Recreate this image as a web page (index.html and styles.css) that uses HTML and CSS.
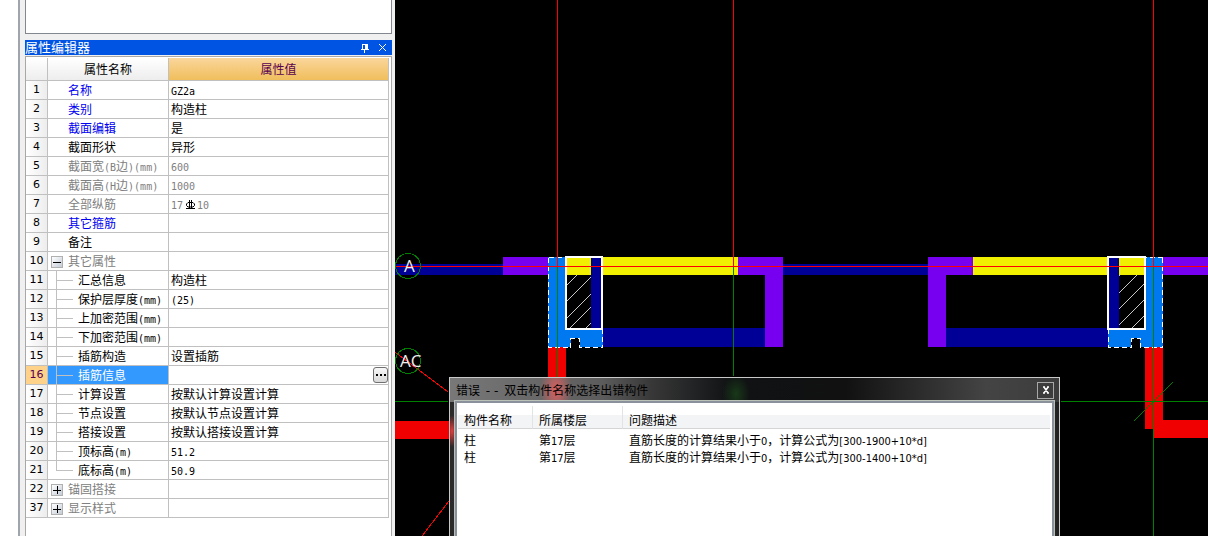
FILE: index.html
```
<!DOCTYPE html>
<html lang="zh-CN">
<head>
<meta charset="utf-8">
<title>属性编辑器</title>
<link rel="stylesheet" href="styles.css">
</head>
<body>
<main class="app">
  <aside class="sidebar">
    <div class="list-box"></div>
    <section class="editor">
      <header class="editor-title">
        <h1>属性编辑器</h1>
        <button class="title-btn" type="button" aria-label="固定"><svg width="9" height="10" viewBox="0 0 9 10" shape-rendering="crispEdges"><path d="M2 1h6v1H2zM2 1h1v5H2zM5 1h3v5H5zM1 6h8v1H1zM4 7h1v3H4z" fill="#fff"/></svg></button>
        <button class="title-btn" type="button" aria-label="关闭"><svg width="9" height="9" viewBox="0 0 9 9"><path d="M1 1l7 7M8 1l-7 7" stroke="#fff"/></svg></button>
      </header>
      <div class="grid-box">
        <table class="props">
          <colgroup><col class="c-num"><col class="c-name"><col></colgroup>
          <thead><tr><th></th><th>属性名称</th><th class="active">属性值</th></tr></thead>
          <tbody>
            <tr><th>1</th><td class="name blue-text">名称</td><td><span class="mono">GZ2a</span></td></tr>
            <tr><th>2</th><td class="name blue-text">类别</td><td>构造柱</td></tr>
            <tr><th>3</th><td class="name blue-text">截面编辑</td><td>是</td></tr>
            <tr><th>4</th><td class="name">截面形状</td><td>异形</td></tr>
            <tr class="muted"><th>5</th><td class="name">截面宽<span class="mono">(B</span>边<span class="mono">)(mm)</span></td><td><span class="mono">600</span></td></tr>
            <tr class="muted"><th>6</th><td class="name">截面高<span class="mono">(H</span>边<span class="mono">)(mm)</span></td><td><span class="mono">1000</span></td></tr>
            <tr class="muted"><th>7</th><td class="name">全部纵筋</td><td><span class="mono">17</span><svg class="rebar" width="14" height="10" viewBox="0 0 14 10" role="img" aria-label="三级钢"><path d="M5 2.500h5l1.500 1.500v1.500L10 7H5L3.500 5.500V4zM6.500 0v9M8.500 0v9M3 8.500h9" fill="none" stroke="#000"/></svg><span class="mono">10</span></td></tr>
            <tr><th>8</th><td class="name blue-text">其它箍筋</td><td></td></tr>
            <tr><th>9</th><td class="name">备注</td><td></td></tr>
            <tr class="muted"><th>10</th><td class="group"><button class="toggle" type="button" aria-label="折叠"></button>其它属性</td><td></td></tr>
            <tr><th>11</th><td class="child">汇总信息</td><td>构造柱</td></tr>
            <tr><th>12</th><td class="child">保护层厚度<span class="mono">(mm)</span></td><td><span class="mono">(25)</span></td></tr>
            <tr><th>13</th><td class="child">上加密范围<span class="mono">(mm)</span></td><td></td></tr>
            <tr><th>14</th><td class="child">下加密范围<span class="mono">(mm)</span></td><td></td></tr>
            <tr><th>15</th><td class="child">插筋构造</td><td>设置插筋</td></tr>
            <tr class="selected"><th>16</th><td class="child">插筋信息</td><td class="action"><button class="more" type="button" aria-label="更多"><i></i><i></i><i></i></button></td></tr>
            <tr><th>17</th><td class="child">计算设置</td><td>按默认计算设置计算</td></tr>
            <tr><th>18</th><td class="child">节点设置</td><td>按默认节点设置计算</td></tr>
            <tr><th>19</th><td class="child">搭接设置</td><td>按默认搭接设置计算</td></tr>
            <tr><th>20</th><td class="child">顶标高<span class="mono">(m)</span></td><td><span class="mono">51.2</span></td></tr>
            <tr><th>21</th><td class="child last">底标高<span class="mono">(m)</span></td><td><span class="mono">50.9</span></td></tr>
            <tr class="muted"><th>22</th><td class="group"><button class="toggle plus" type="button" aria-label="展开"></button>锚固搭接</td><td></td></tr>
            <tr class="muted"><th>37</th><td class="group"><button class="toggle plus" type="button" aria-label="展开"></button>显示样式</td><td></td></tr>
          </tbody>
        </table>
      </div>
    </section>
  </aside>
  <section class="viewport">
    <svg class="drawing" viewBox="395 0 813 536" preserveAspectRatio="xMinYMin slice" shape-rendering="crispEdges">
      <path class="navy" d="M395 264h108v11H395zM783 264h145v11H783zM603 328h162v19H603zM946 328h162v19H946z"/>
      <path class="violet" d="M503 257h45v18H503zM738 257h45v90h-18v-72h-27zM928 257h45v18h-27v72h-18zM1163 257h45v18h-45z"/>
      <path class="yellow" d="M566 257h172v18H566zM973 257h172v18H973z"/>
      <path class="navy" d="M591 258h11v70h-11zM1109 258h10v70h-10z"/>
      <path class="red" d="M548 347h18v50h-18zM395 421h60v18h-60zM1145 347h18v73h45v18h-55v-9h-8z"/>
      <path class="blue" d="M548 257h18v72h37v18h-23v-9h-9v9h-23zM1163 257h-18v72h-37v18h23v-9h9v9h23z"/>
      <path class="dash" d="M548.500 257.500h18M548.500 257.500v90h22v-9h9v9h23v-18M1162.500 257.500h-18M1162.500 257.500v90h-22v-9h-9v9h-23v-18"/>
      <path class="hatch" d="M567 285l10-10M567 301l24-24M567 318l24-24M570 328l21-21M586 328l5-5M1119 276l1-1M1119 293l18-18M1119 309l26-26M1119 325l26-26M1132 328l13-13"/>
      <path class="outline" d="M566 257h36v72h-36zM1108 257h37v72h-37z"/>
      <path class="axis-green" d="M557.500 266v111M733.500 266v110M1153.500 266v270M395 401.500h53M1061 401.500h147"/>
      <path class="axis-red" d="M395 266.500h813M557.500 0v266M733.500 0v266M1153.500 0v266M395 352l53 40M422 536l27-35"/>
      <path class="axis-green" d="M1134 421l39-39"/>
      <circle class="bubble" cx="408" cy="266" r="12.500"/>
      <circle class="bubble" cx="408" cy="361" r="12.500"/>
      <text class="tag" x="404" y="272">A</text>
      <text class="tag" x="400" y="367">AC</text>
    </svg>
    <section class="dialog" role="dialog" aria-labelledby="dlg-title">
      <header class="dialog-title">
        <h2 id="dlg-title">错误<span class="sep"> - - </span>双击构件名称选择出错构件</h2>
        <button class="dialog-close" type="button" aria-label="关闭"><svg width="8" height="8" viewBox="0 0 8 8"><path d="M2 1l4 6M6 1l-4 6M1 1h2M5 1h2M1 7h2M5 7h2" stroke="#fff" stroke-width="1.500"/></svg></button>
      </header>
      <div class="dialog-body">
        <table class="errors">
          <colgroup><col class="e-name"><col class="e-floor"><col></colgroup>
          <thead><tr><th>构件名称</th><th>所属楼层</th><th>问题描述</th></tr></thead>
          <tbody>
            <tr><td>柱</td><td>第<span class="latin">17</span>层</td><td>直筋长度的计算结果小于<span class="latin">0</span>，计算公式为<span class="latin">[300-1900+10*d]</span></td></tr>
            <tr><td>柱</td><td>第<span class="latin">17</span>层</td><td>直筋长度的计算结果小于<span class="latin">0</span>，计算公式为<span class="latin">[300-1400+10*d]</span></td></tr>
          </tbody>
        </table>
      </div>
    </section>
  </section>
</main>
</body>
</html>
```
FILE: styles.css
```
* { box-sizing: border-box; }
body { margin: 0; background: #fff; color: #000; font: 12px/18px "Noto Sans CJK SC", sans-serif; }
h1, h2 { margin: 0; font-weight: 400; }
button { padding: 0; margin: 0; border: 0; background: none; }
table { border-collapse: separate; border-spacing: 0; table-layout: fixed; width: 100%; }
th { font-weight: 400; }
.app { display: flex; height: 100vh; overflow: hidden; padding-left: 18px; }
.sidebar { flex: 0 0 377px; display: flex; flex-direction: column; gap: 6px; padding: 0 3px 0 5px; border-left: 2px solid #a0a5ad; background: #f0f0f0; }
.list-box { flex: 0 0 34px; border: 1px solid #828790; border-top: 0; background: #fff; }
.editor { flex: 1; min-height: 0; display: flex; flex-direction: column; gap: 1px; }
.editor-title { flex: 0 0 15px; display: flex; align-items: center; gap: 9px; padding-right: 5px; background: #0054e3; color: #fff; }
.editor-title h1 { flex: 1; font-size: 13px; line-height: 14px; height: 15px; }
.title-btn { display: grid; place-items: center; width: 9px; height: 13px; }
.grid-box { flex: 1; min-height: 0; padding: 1px 2px 0 0; border: 1px solid #a8a8a8; border-bottom: 0; background: #fff; }
.props th, .props td { height: 19px; padding: 0 0 0 2px; border: 1px solid #c0c0c0; border-width: 0 1px 1px 0; line-height: 18px; white-space: nowrap; text-align: left; }
.props .c-num { width: 22px; }
.props .c-name { width: 121px; }
.props thead th { height: 23px; padding: 0; text-align: center; background: linear-gradient(#fff, #ededed); }
.props thead .active { background: linear-gradient(#fad69c, #f0be5c); color: #5a0050; }
.props tbody th { padding: 0; text-align: center; background: linear-gradient(90deg, #fff, #ededed); font: 11px/18px "DejaVu Sans", sans-serif; }
.mono { font-family: "DejaVu Sans Mono", monospace; font-size: 10px; line-height: 10px; }
.props .name { padding-left: 20px; }
.blue-text { color: #0000f0; }
.muted td { color: #808080; }
.rebar { display: inline-block; vertical-align: -1px; }
.props .group { padding-left: 3px; }
.toggle { display: inline-block; width: 12px; height: 12px; margin-right: 5px; vertical-align: -1px; border: 1px solid #b0b0b0; background: linear-gradient(#000, #000) center / 8px 1px no-repeat, linear-gradient(135deg, #fff, #c4ccd6); }
.plus { background: linear-gradient(#000, #000) center / 8px 1px no-repeat, linear-gradient(#000, #000) center / 1px 8px no-repeat, linear-gradient(135deg, #fff, #c4ccd6); }
.props .child { padding-left: 30px; background: linear-gradient(#c0c0c0, #c0c0c0) 8px 0 / 1px 100% no-repeat, linear-gradient(#c0c0c0, #c0c0c0) 8px 9px / 17px 1px no-repeat; }
.props .last { background-size: 1px 10px, 17px 1px; }
.props .selected .child { background-color: #3399ff; color: #fff; }
.props .selected th { background: #ffd28a; color: #5a0050; }
.props .action { padding: 0; }
.more { display: flex; align-items: center; justify-content: center; gap: 2px; width: 15px; height: 16px; margin-left: auto; border: 1px solid #707070; border-radius: 3px; background: linear-gradient(#f8f8f8, #d8d8d8); }
.more i { width: 2px; height: 2px; background: #000; }

.viewport { position: relative; flex: 1; min-width: 0; background: #000; }
.drawing { display: block; width: 100%; height: 100%; }
.navy { fill: #000096; }
.violet { fill: #7800f0; }
.yellow { fill: #f0f000; }
.red { fill: #f00000; }
.blue { fill: #0078f0; }
.dash, .hatch, .outline, .axis-green, .axis-red, .bubble { fill: none; }
.dash { stroke: #fff; stroke-dasharray: 5 3; }
.hatch { stroke: #c8c8c8; }
.outline { stroke: #fff; stroke-width: 2; }
.axis-green, .bubble { stroke: #008000; }
.axis-red { stroke: #f00; }
.tag { fill: #f0f0f0; font: 17px "Open Sans", sans-serif; }

.dialog { position: absolute; top: 377px; right: 148px; bottom: 0; left: 54px; display: flex; flex-direction: column; padding: 1px 5px 0; border: 1px solid #c8c8c8; border-bottom: 0; background: radial-gradient(ellipse 6px 16px at 2px 53px, #e04040, #e0404000), linear-gradient(90deg, #2a2a2a, #151515 50%, #3c3c3c 95%, #202020); }
.dialog::before { content: ""; position: absolute; inset: 0 auto auto 0; width: 100%; height: 24px; background: radial-gradient(ellipse 16px 28px at 106px 12px, #d96060, #d9606000), radial-gradient(ellipse 14px 20px at 286px 16px, #183818, #18381800), linear-gradient(90deg, #787878, #5c5c5c 25%, #383838 33%, #101214 46%, #111 65%, #444 88%, #3c3c3c); }
.dialog-title { position: relative; flex: 0 0 22px; display: flex; align-items: center; }
.dialog-title h2 { flex: 1; padding-left: 1px; font-size: 12px; line-height: 20px; }
.sep { padding: 0 2px; font-family: "DejaVu Sans", sans-serif; white-space: pre; }
.dialog-close { display: grid; place-items: center; width: 17px; height: 17px; border: 1px solid #a8a8a8; background: #3c3c3c; }
.dialog-body { position: relative; flex: 1; padding: 3px 2px 0 1px; border: 2px solid #8a919b; border-bottom: 0; outline: 1px solid #b8c0b8; background: #fff; }
.errors th, .errors td { padding: 0 0 0 6px; text-align: left; white-space: nowrap; line-height: 17px; }
.latin { font: 11px/11px "DejaVu Sans Condensed", sans-serif; }
.errors th { height: 23px; padding-top: 4px; border-bottom: 1px solid #d5d5d5; border-right: 1px solid #e2e3e5; background: linear-gradient(#fff 40%, #f3f4f6 40%); }
.errors th:last-child { border-right: 0; }
.errors tbody::before { content: ""; display: block; height: 2px; }
.errors td { height: 17px; }
.errors .e-name { width: 75px; }
.errors .e-floor { width: 90px; }
```
